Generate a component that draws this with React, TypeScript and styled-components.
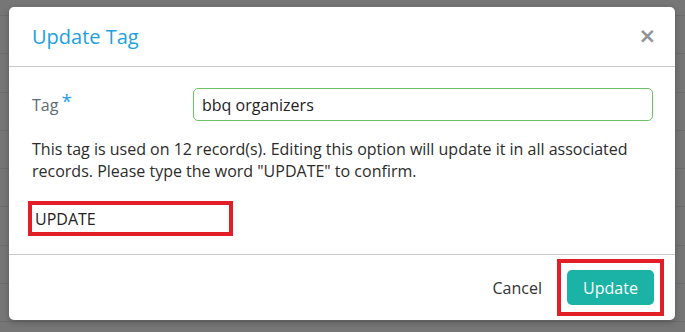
import React from 'react'
import styled, { createGlobalStyle } from 'styled-components'

const GlobalStyle = createGlobalStyle`
  html, body {
    margin: 0;
    padding: 0;
    height: 100%;
  }
  body {
    font-family: "Open Sans", "Noto Sans", Arial, sans-serif;
    background-color: #767676;
    background-image: repeating-linear-gradient(
      to bottom,
      transparent 0px,
      transparent 15px,
      #6c6c6c 15px,
      #6c6c6c 16px,
      transparent 16px,
      transparent 38.3px
    );
  }
`

const Backdrop = styled.div`
  min-height: 332px;
  padding: 7px 10px 0 9px;
  box-sizing: border-box;
`

const Modal = styled.div`
  width: 666px;
  height: 313px;
  background: #fff;
  border-radius: 5px;
  box-shadow: 0 2px 6px rgba(0, 0, 0, 0.25);
  display: flex;
  flex-direction: column;
  overflow: hidden;
`

const Header = styled.div`
  height: 59px;
  display: flex;
  align-items: center;
  justify-content: space-between;
  padding: 0 19px 0 23px;
  border-bottom: 1px solid #c8c8c8;
`

const Title = styled.h3`
  margin: 0;
  font-size: 20px;
  font-weight: 400;
  color: #1e9fe0;
`

const Close = styled.button`
  border: none;
  background: none;
  padding: 0;
  font-size: 21px;
  font-weight: 700;
  line-height: 1;
  color: #8f9499;
  cursor: pointer;
  font-family: "DejaVu Sans", Arial, sans-serif;
`

const Body = styled.div`
  flex: 1;
  padding: 21px 22px 0 23px;
  display: flex;
  flex-direction: column;
`

const FieldRow = styled.div`
  display: flex;
  align-items: center;
`

const Label = styled.label`
  width: 161px;
  font-size: 16px;
  color: #5f6b73;
  position: relative;
  top: -1px;
`

const Required = styled.span`
  color: #1e9fe0;
  font-size: 19px;
  margin-left: 3px;
  position: relative;
  top: -3px;
`

const TextInput = styled.input`
  flex: 1;
  height: 33px;
  box-sizing: border-box;
  border: 1px solid #6cc065;
  border-radius: 5px;
  padding: 0 8px;
  font-family: inherit;
  font-size: 16px;
  color: #222;
  outline: none;
`

const Notice = styled.p`
  margin: 17px 0 0;
  font-size: 16px;
  line-height: 22px;
  color: #2c2c2c;
`

const Highlight = styled.div`
  border: 4px solid #e21f26;
  display: inline-flex;
  box-sizing: border-box;
`

const ConfirmWrap = styled(Highlight)`
  margin: 19px 0 0 -4px;
  width: 205px;
  height: 35px;
`

const ConfirmInput = styled.input`
  width: 100%;
  border: none;
  outline: none;
  padding: 0 3px;
  font-family: inherit;
  font-size: 16px;
  color: #222;
`

const Footer = styled.div`
  height: 65px;
  border-top: 1px solid #c8c8c8;
  display: flex;
  align-items: center;
  justify-content: flex-end;
  padding-right: 11px;
  gap: 15px;
`

const TextButton = styled.button`
  border: none;
  background: none;
  padding: 0;
  font-family: inherit;
  font-size: 16px;
  color: #333;
  cursor: pointer;
`

const PrimaryButton = styled.button`
  width: 87px;
  height: 35px;
  border: none;
  border-radius: 5px;
  background: #1ab3a5;
  color: #fff;
  font-family: inherit;
  font-size: 16px;
  cursor: pointer;
`

const ButtonWrap = styled(Highlight)`
  padding: 7px 6px;
`

export default function App() {
  return (
    <>
      <GlobalStyle />
      <Backdrop>
        <Modal>
          <Header>
            <Title>Update Tag</Title>
            <Close aria-label="Close">×</Close>
          </Header>
          <Body>
            <FieldRow>
              <Label>
                Tag<Required>*</Required>
              </Label>
              <TextInput defaultValue="bbq organizers" />
            </FieldRow>
            <Notice>
              This tag is used on 12 record(s). Editing this option will update it in all associated
              records. Please type the word "UPDATE" to confirm.
            </Notice>
            <ConfirmWrap>
              <ConfirmInput defaultValue="UPDATE" />
            </ConfirmWrap>
          </Body>
          <Footer>
            <TextButton>Cancel</TextButton>
            <ButtonWrap>
              <PrimaryButton>Update</PrimaryButton>
            </ButtonWrap>
          </Footer>
        </Modal>
      </Backdrop>
    </>
  )
}
